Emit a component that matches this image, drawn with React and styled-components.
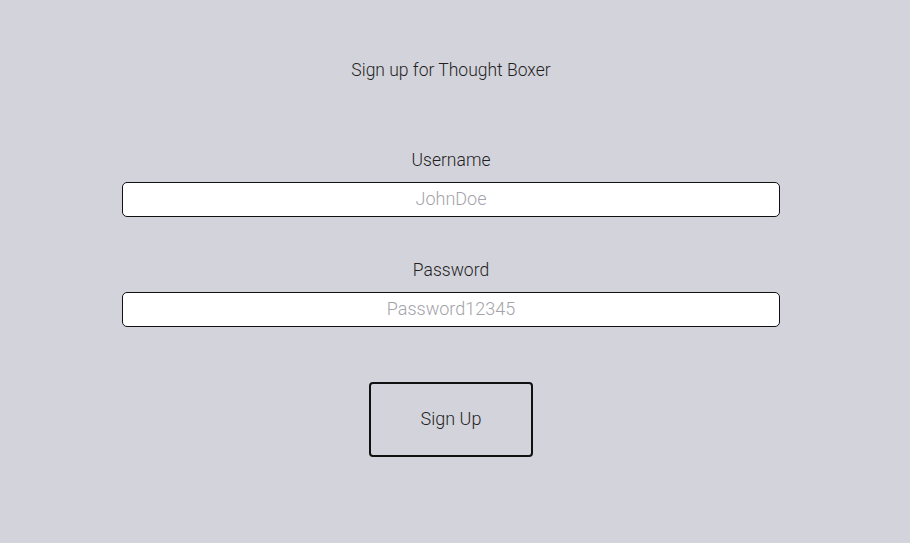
import React from "react";
import styled, { createGlobalStyle } from "styled-components";

const GlobalStyle = createGlobalStyle`
  html, body {
    margin: 0;
    padding: 0;
    background-color: #d3d3db;
  }

  body {
    font-family: Roboto, "Liberation Sans", sans-serif;
    font-weight: 300;
    color: #1f1f24;
  }
`;

const Page = styled.main`
  min-height: 543px;
  display: flex;
  flex-direction: column;
  align-items: center;
  padding-right: 8px;
  box-sizing: border-box;
`;

const Title = styled.h1`
  margin: 58px 0 0;
  font-size: 17.5px;
  line-height: 24px;
  font-weight: 300;
`;

const Form = styled.form`
  display: flex;
  flex-direction: column;
  align-items: center;
  margin-top: 67px;
`;

const Field = styled.div`
  display: flex;
  flex-direction: column;
  align-items: center;
  gap: 11px;
  margin-bottom: ${({ $spacing }) => $spacing}px;
`;

const Label = styled.label`
  font-size: 17.5px;
  line-height: 22px;
`;

const Input = styled.input`
  width: 658px;
  height: 35px;
  box-sizing: border-box;
  border: 1px solid #111;
  border-radius: 5px;
  background: #fff;
  text-align: center;
  font-family: Roboto, "Liberation Sans", sans-serif;
  font-weight: 300;
  font-size: 18px;
  line-height: 20px;
  padding: 0 0 2px;
  color: #1f1f24;
  outline: none;

  &::placeholder {
    color: #a3a3aa;
  }
`;

const SubmitButton = styled.button`
  width: 164px;
  height: 75px;
  box-sizing: border-box;
  border: 2px solid #111;
  border-radius: 4px;
  background: transparent;
  font-family: Roboto, "Liberation Sans", sans-serif;
  font-weight: 300;
  font-size: 18px;
  padding: 0 0 2px;
  color: #1f1f24;
  cursor: pointer;
`;

const App = () => {
  return (
    <>
      <GlobalStyle />
      <Page>
        <Title>Sign up for Thought Boxer</Title>
        <Form onSubmit={(e) => e.preventDefault()}>
          <Field $spacing={42}>
            <Label htmlFor="username">Username</Label>
            <Input id="username" type="text" placeholder="JohnDoe" />
          </Field>
          <Field $spacing={55}>
            <Label htmlFor="password">Password</Label>
            <Input id="password" type="password" placeholder="Password12345" />
          </Field>
          <SubmitButton type="submit">Sign Up</SubmitButton>
        </Form>
      </Page>
    </>
  );
};

export default App;
